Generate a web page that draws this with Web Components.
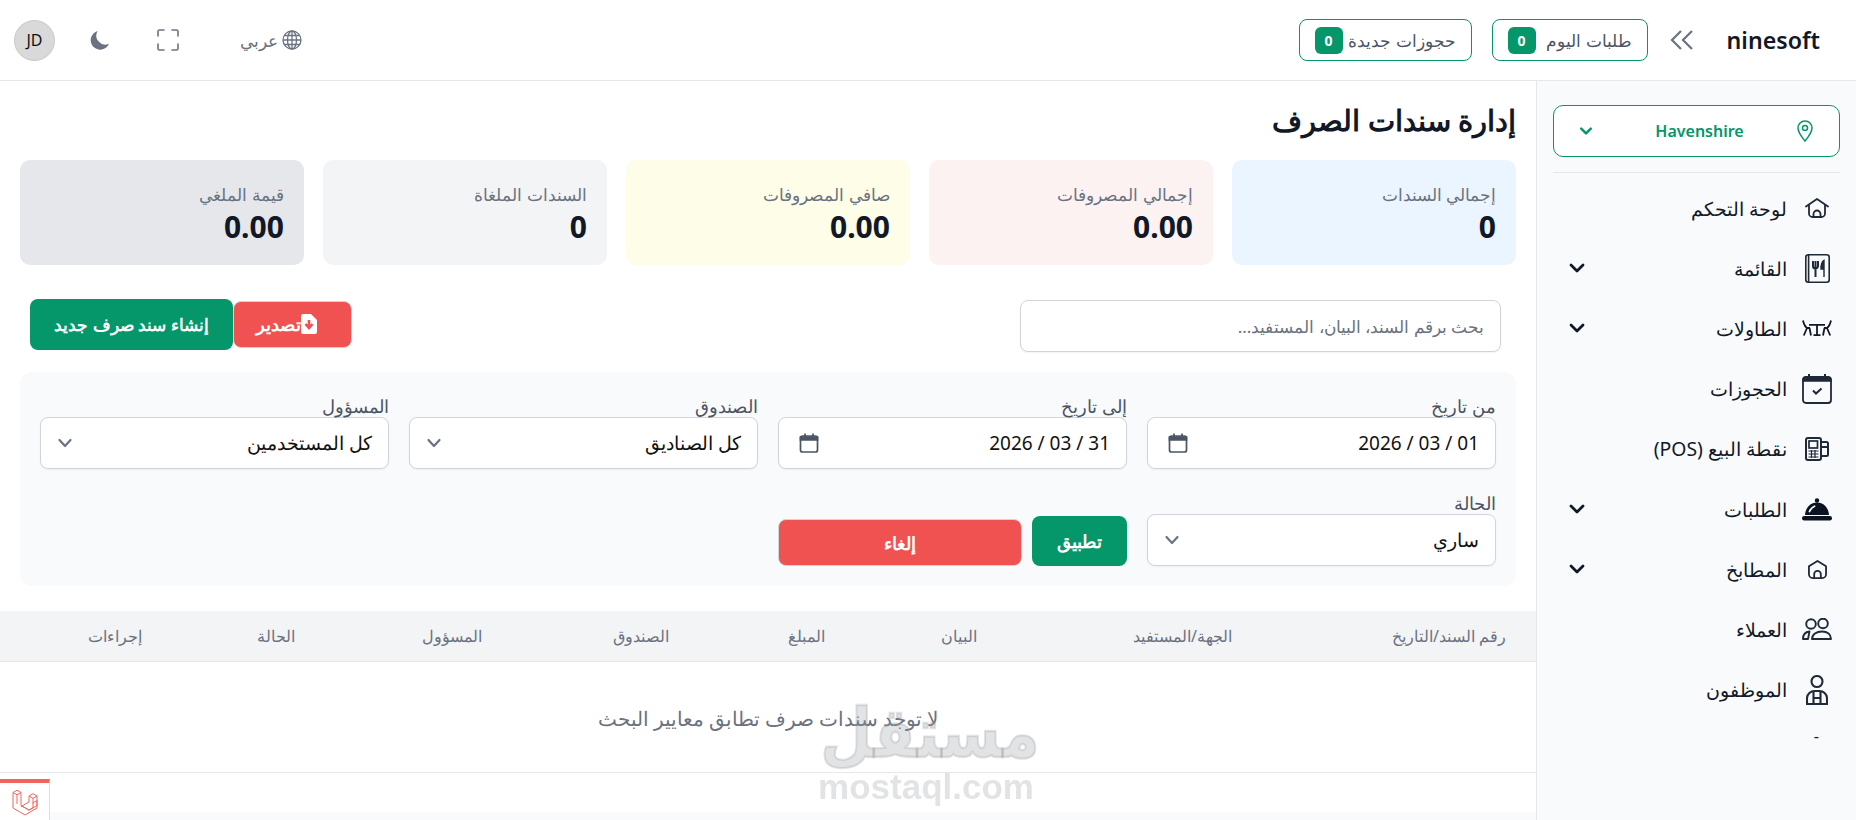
<!DOCTYPE html>
<html lang="ar" dir="rtl">
<head>
<meta charset="utf-8">
<title>إدارة سندات الصرف</title>
<style>
  html, body { margin: 0; height: 100%; overflow: hidden; background: #fff; }
  body { font-family: "Noto Sans", "Open Sans", sans-serif; color: #111827; }
</style>
</head>
<body>
<app-shell>
  <app-topbar slot="top"></app-topbar>
  <page-content slot="main"></page-content>
  <app-sidebar slot="side"></app-sidebar>
</app-shell>
<debug-tab></debug-tab>
<water-mark></water-mark>

<script>
const ICONS = {
  house: `<svg viewBox="0 0 24 20" width="24" height="20" fill="none" stroke="#1f2937" stroke-width="1.800" stroke-linejoin="round" stroke-linecap="round"><path d="M1 8.500 12 1l11 7.500"/><path d="M4 7v8.500A3.500 3.500 0 0 0 7.500 19h9a3.500 3.500 0 0 0 3.500-3.500V7"/><path d="M8.500 19v-3a3.500 3.500 0 0 1 7 0v3" /></svg>`,
  menu: `<svg viewBox="0 0 25 29" width="25" height="29" fill="none" stroke="#1f2937" stroke-width="1.600"><rect x=".8" y=".8" width="23.400" height="27.400" rx="2.500"/><path d="M3.600 .8v27.400"/><path d="M8 7v5a2.500 2.500 0 0 0 5 0V7M10.500 7v16" stroke-width="2"/><path d="M19 23V6.500c-2 1-3 3.500-3 8.500h3z" fill="#1f2937" stroke-width="1.400"/></svg>`,
  tables: `<svg viewBox="0 0 30 16" width="30" height="16" fill="none" stroke="#111827" stroke-width="1.800"><path d="M1 .5C1.800 4 3 6.500 5 8H8M5 8 1.800 15.500M7.500 8 9 15.500"/><path d="M29 .5C28.200 4 27 6.500 25 8H22M25 8l3.200 7.500M22.500 8 21 15.500"/><path d="M7 4.800h16M15 4.800V15M11.500 15.200h7" /></svg>`,
  calendar: `<svg viewBox="0 0 30 30" width="30" height="30" fill="none" stroke="#1f2937" stroke-width="1.800"><rect x="1" y="3" width="28" height="26" rx="3"/><path d="M1 6.500a3 3 0 0 1 3-3h22a3 3 0 0 1 3 3V7H1z" fill="#1f2937" stroke-width="1.500"/><path d="M7 0v4M23 0v4" stroke-width="2"/><path d="m11 16.500 3 3 5.500-5" stroke-width="2"/></svg>`,
  pos: `<svg viewBox="0 0 24 24" width="24" height="24" fill="none" stroke="#1f2937" stroke-width="2"><rect x="1" y="1" width="15" height="22" rx="2"/><rect x="4" y="4" width="8.500" height="7" fill="none" stroke-width="1.700"/><path d="M3.500 14h10M3.500 17h10M3.500 20h10M6.500 13v8M10 13v8" stroke-width="1.200"/><path d="M16 5h5.500a1.500 1.500 0 0 1 1.500 1.500v11a1.500 1.500 0 0 1-1.500 1.500H16M16 10h7"/></svg>`,
  bell: `<svg viewBox="0 0 30 23" width="30" height="23" fill="#0b1220"><circle cx="15" cy="2.500" r="2.200"/><path d="M3 17C3.500 10 8 4.500 15 4.500S26.500 10 27 17z"/><rect x="0" y="18" width="30" height="4.500" rx="2.200"/><path d="M7.500 13.500C8.500 11 10 9.500 12.500 8.300" fill="none" stroke="#f9fafb" stroke-width="1.800" stroke-linecap="round"/></svg>`,
  kitchen: `<svg viewBox="0 0 20 20" width="19" height="19" fill="none" stroke="#1f2937" stroke-width="1.900" stroke-linejoin="round"><path d="M10 1 19 6.500V15a4 4 0 0 1-4 4H5a4 4 0 0 1-4-4V6.500z"/><path d="M6.500 19v-4a3.500 3.500 0 0 1 7 0v4"/></svg>`,
  clients: `<svg viewBox="0 0 30 22" width="30" height="22" fill="none" stroke="#1f2937" stroke-width="1.900" stroke-linejoin="round"><circle cx="9" cy="6" r="4.800"/><circle cx="21" cy="5.500" r="4.800"/><path d="M1 21c0-4 2-7 6.500-7.500L6 21z"/><path d="M10 21c0-4.500 4.500-7.500 10-7.500S29 16.500 29 21z"/></svg>`,
  staff: `<svg viewBox="0 0 22 30" width="22" height="30" fill="none" stroke="#1f2937" stroke-width="2.100" stroke-linejoin="round"><circle cx="11" cy="6.500" r="5.500"/><path d="M1 29v-6a7.500 7.500 0 0 1 7.500-7h5A7.500 7.500 0 0 1 21 23v6z"/><path d="M7.500 16v13M14.500 16v13M7.500 23h7"/></svg>`,
  chevron: `<svg viewBox="0 0 20 20" width="20" height="20" fill="none" stroke="#111827" stroke-width="2.800" stroke-linecap="round" stroke-linejoin="round"><path d="m4 7 6 6 6-6"/></svg>`,
  caret: `<svg viewBox="0 0 20 20" width="20" height="20" fill="none" stroke="#6b7280" stroke-width="2.200" stroke-linecap="round" stroke-linejoin="round"><path d="m4.500 7 5.500 6 5.500-6"/></svg>`,
  date: `<svg viewBox="0 0 20 22" width="20" height="22" fill="none" stroke="#4b5563" stroke-width="1.700"><rect x="1.500" y="4" width="17" height="16" rx="2"/><path d="M1.500 5h17v3h-17z" fill="#4b5563"/><path d="M6 1.500V5M14 1.500V5"/></svg>`
};

// shell: top bar over a main column and the side menu
class AppShell extends HTMLElement {
  constructor() {
    super();
    this.attachShadow({ mode: "open" }).innerHTML = `
    <style>
      :host { display: flex; flex-direction: column; height: 820px; }
      .body { display: flex; flex: 1; min-height: 0; }
      .main { flex: 1; min-width: 0; background: #f9fafb; }
    </style>
    <slot name="top"></slot>
    <div class="body">
      <slot name="side"></slot>
      <div class="main"><slot name="main"></slot></div>
    </div>`;
  }
}

class AppTopbar extends HTMLElement {
  constructor() {
    super();
    this.attachShadow({ mode: "open" }).innerHTML = `
    <style>
      :host { display: flex; align-items: center; justify-content: space-between; height: 80px;
        padding: 0 36px 0 14px; border-bottom: 1px solid #e5e7eb; background: #fff; }
      .start, .end { display: flex; align-items: center; }
      .brand { font-size: 23.200px; font-weight: 600; color: #111827; }
      .toggle { margin: 0 33px 0 22px; display: flex; }
      .lang { display: flex; align-items: center; gap: 4px; color: #6b7280; font-size: 17px; margin-left: 61px; }
      .full { margin-left: 47px; display: flex; }
      .moon { margin-left: 34px; display: flex; }
      .avatar { width: 41px; height: 41px; border-radius: 50%; background: #d9d9d9; border: 1px solid #c9c9c9; box-sizing: border-box;
        display: flex; align-items: center; justify-content: center; font-size: 16px; color: #111; }
    </style>
    <div class="start">
      <span class="brand">ninesoft</span>
      <span class="toggle"><svg viewBox="0 0 24 22" width="24" height="22" fill="none" stroke="#6b7280" stroke-width="2.200" stroke-linejoin="miter"><path d="M11 2 2 11l9 9M22 2l-9 9 9 9"/></svg></span>
      <count-badge label="طلبات اليوم" style="width:156px"></count-badge>
      <count-badge label="حجوزات جديدة" style="width:173px;margin-right:20px"></count-badge>
    </div>
    <div class="end">
      <span class="lang"><svg viewBox="0 0 20 20" width="20" height="20" fill="none" stroke="#6b7280" stroke-width="1.300"><circle cx="10" cy="10" r="9"/><ellipse cx="10" cy="10" rx="4.500" ry="9"/><path d="M10 1v18M1 10h18M2.200 5.500h15.600M2.200 14.500h15.600"/></svg><span>عربي</span></span>
      <span class="full"><svg viewBox="0 0 22 22" width="22" height="22" fill="none" stroke="#6b7280" stroke-width="1.600" stroke-linecap="round"><path d="M1 7V2.500A1.500 1.500 0 0 1 2.500 1H7M15 1h4.500A1.500 1.500 0 0 1 21 2.500V7M21 15v4.500a1.500 1.500 0 0 1-1.500 1.500H15M7 21H2.500A1.500 1.500 0 0 1 1 19.500V15"/></svg></span>
      <span class="moon"><svg viewBox="0 0 22 22" width="21" height="21" fill="#6b7280"><path d="M9 1a10 10 0 1 0 12 13.500A9.500 9.500 0 0 1 9 1z"/></svg></span>
      <span class="avatar">JD</span>
    </div>`;
  }
}

class CountBadge extends HTMLElement {
  constructor() {
    super();
    this.attachShadow({ mode: "open" }).innerHTML = `
    <style>
      :host { display: flex; align-items: center; justify-content: space-between; height: 42px; box-sizing: border-box; padding: 0 15px 0 15px;
        border: 1px solid #059669; border-radius: 8px; background: #fff; font-size: 17px; color: #4b5563; }
      b { display: flex; align-items: center; justify-content: center; width: 28px; height: 27px; border-radius: 6px;
        background: #059669; color: #fff; font-size: 14px; font-weight: 700; }
    </style>
    <span>${this.getAttribute("label")}</span><b>0</b>`;
  }
}

class NavItem extends HTMLElement {
  constructor() {
    super();
    const open = this.hasAttribute("open");
    this.attachShadow({ mode: "open" }).innerHTML = `
    <style>
      :host { display: flex; align-items: center; height: 60.200px; font-size: 19.400px; color: #111827; padding: 0 5px 0 0; }
      .icon { width: 36px; display: flex; justify-content: center; align-items: center; flex: none; }
      .label { margin-right: 12px; flex: 1; }
      .arrow { display: flex; margin-left: 14px; }
    </style>
    <span class="icon">${ICONS[this.getAttribute("icon")]}</span>
    <span class="label"><slot></slot></span>
    ${open ? `<span class="arrow">${ICONS.chevron}</span>` : ""}`;
  }
}

class AppSidebar extends HTMLElement {
  constructor() {
    super();
    this.attachShadow({ mode: "open" }).innerHTML = `
    <style>
      :host { display: block; width: 320px; flex: none; box-sizing: border-box; background: #f9fafb;
        border-left: 1px solid #e5e7eb; padding: 24px 16px 0 16px; }
      .branch { display: flex; align-items: center; justify-content: space-between; height: 52px; box-sizing: border-box;
        border: 1px solid #059669; border-radius: 10px; background: #fff; padding: 0 24px 0 24px; color: #059669; font-size: 16px; font-weight: 600; }
      .name { margin-left: 10px; }
      hr { border: 0; border-top: 1px solid #e5e7eb; margin: 15px 0 5px; }
      nav { display: block; }
      .dash { padding-right: 21px; height: 40px; font-size: 16px; line-height: 32px; }
    </style>
    <div class="branch">
      <svg viewBox="0 0 20 24" width="20" height="24" fill="none" stroke="#059669" stroke-width="1.500"><path d="M10 22C5 16 3 12.500 3 9a7 7 0 0 1 14 0c0 3.500-2 7-7 13z"/><circle cx="10" cy="9" r="2.500"/></svg>
      <span class="name">Havenshire</span>
      <svg viewBox="0 0 20 20" width="16" height="16" fill="none" stroke="#059669" stroke-width="3" stroke-linecap="round" stroke-linejoin="round"><path d="m4 7 6 6 6-6"/></svg>
    </div>
    <hr>
    <nav>
      <nav-item icon="house">لوحة التحكم</nav-item>
      <nav-item icon="menu" open>القائمة</nav-item>
      <nav-item icon="tables" open>الطاولات</nav-item>
      <nav-item icon="calendar">الحجوزات</nav-item>
      <nav-item icon="pos">نقطة البيع (POS)</nav-item>
      <nav-item icon="bell" open>الطلبات</nav-item>
      <nav-item icon="kitchen" open>المطابخ</nav-item>
      <nav-item icon="clients">العملاء</nav-item>
      <nav-item icon="staff">الموظفون</nav-item>
    </nav>
    <div class="dash">-</div>`;
  }
}

class StatCard extends HTMLElement {
  constructor() {
    super();
    this.attachShadow({ mode: "open" }).innerHTML = `
    <style>
      :host { display: block; height: 105px; box-sizing: border-box; padding: 22px 20px 0; border-radius: 10px; background: var(--bg); }
      .t { font-size: 17.300px; line-height: 25px; color: #6b7280; }
      .v { font-size: 30px; line-height: 40px; font-weight: 700; color: #111827; }
    </style>
    <div class="t">${this.getAttribute("label")}</div>
    <div class="v">${this.getAttribute("value")}</div>`;
  }
}

class FilterField extends HTMLElement {
  constructor() {
    super();
    const isDate = this.getAttribute("type") === "date";
    this.attachShadow({ mode: "open" }).innerHTML = `
    <style>
      :host { display: block; }
      label { display: block; font-size: 17.500px; line-height: 22px; color: #4b5563; }
      .box { display: flex; align-items: center; justify-content: space-between; height: 52px; box-sizing: border-box;
        background: #fff; border: 1px solid #d1d5db; border-radius: 8px; box-shadow: 0 1px 2px rgba(0,0,0,.05);
        padding: 0 16px 0 ${isDate ? "20px" : "14px"}; font-size: 19px; color: #111; }
    </style>
    <label>${this.getAttribute("label")}</label>
    <div class="box">
      <span ${isDate ? 'dir="ltr"' : ""}><slot></slot></span>
      ${isDate ? ICONS.date : ICONS.caret}
    </div>`;
  }
}

class ActionButton extends HTMLElement {
  constructor() {
    super();
    this.attachShadow({ mode: "open" }).innerHTML = `
    <style>
      :host { display: inline-flex; align-items: center; justify-content: center; box-sizing: border-box; color: #fff;
        border-radius: 8px; font-size: 16.800px; font-weight: 700; background: #f05252; border: 1px solid #d1d5db; }
      :host([tone="green"]) { background: #059669; border: 0; }
    </style>
    <slot></slot>`;
  }
}

class PageContent extends HTMLElement {
  constructor() {
    super();
    const heads = [["رقم السند/التاريخ",274],["الجهة/المستفيد",255],["البيان",152],["المبلغ",156],["الصندوق",187],["المسؤول",187],["الحالة",153],["إجراءات",172]];
    this.attachShadow({ mode: "open" }).innerHTML = `
    <style>
      :host { display: block; background: #fff; height: 731px; overflow: hidden; }
      .pad { padding: 20px 20px 0; }
      h1 { margin: 0 0 21px; font-size: 28.700px; line-height: 38px; font-weight: 700; color: #111827; }
      .stats { display: grid; grid-template-columns: repeat(5, 1fr); gap: 19.200px; }
      .actions { display: flex; justify-content: space-between; align-items: center; margin: 34px 15px 0 10px; height: 54px; }
      .search { width: 481px; height: 52px; box-sizing: border-box; padding: 0 16px; display: flex; align-items: center;
        border: 1px solid #d1d5db; border-radius: 8px; box-shadow: 0 1px 2px rgba(0,0,0,.05); font-size: 17px; color: #6b7280; background: #fff; }
      .btns { display: flex; align-items: center; margin-bottom: 4px; }
      .export { width: 119px; height: 47px; padding-right: 12px; font-size: 17.500px; }
      .create { width: 203px; height: 51px; }
      .filters { display: grid; grid-template-columns: repeat(4, 1fr); column-gap: 20px; row-gap: 23px; margin-top: 19px;
        padding: 23px 20px 20px; background: #f9fafb; border-radius: 12px; }
      .apply { display: flex; gap: 10px; align-items: flex-end; }
      .apply .ok { width: 95px; height: 50px; font-size: 17.500px; font-weight: 600; }
      .apply .no { flex: 1; height: 47px; font-size: 17.500px; }
      .thead { display: grid; grid-template-columns: ${heads.map(h => h[1] + "px").join(" ")}; height: 50px; align-items: center; margin-top: 25px;
        background: #f3f4f6; border-bottom: 1px solid #e5e7eb; font-size: 16px; color: #6b7280; }
      .thead span { padding-right: 30px; }
      .empty { height: 111px; padding-top: 2px; display: flex; align-items: center; justify-content: center; font-size: 19.600px; color: #6b7280;
        border-bottom: 1px solid #e5e7eb; box-sizing: border-box; }
    </style>
    <div class="pad">
      <h1>إدارة سندات الصرف</h1>
      <div class="stats">
        <stat-card label="إجمالي السندات" value="0" style="--bg:#ebf5ff"></stat-card>
        <stat-card label="إجمالي المصروفات" value="0.00" style="--bg:#fdf2f2"></stat-card>
        <stat-card label="صافي المصروفات" value="0.00" style="--bg:#fdfde8"></stat-card>
        <stat-card label="السندات الملغاة" value="0" style="--bg:#f3f4f6"></stat-card>
        <stat-card label="قيمة الملغي" value="0.00" style="--bg:#e5e7eb"></stat-card>
      </div>
      <div class="actions">
        <div class="search">بحث برقم السند، البيان، المستفيد...</div>
        <div class="btns">
          <action-button class="export"><svg viewBox="0 0 16 20" width="16" height="20"><path d="M2 0h8l6 6v12a2 2 0 0 1-2 2H2a2 2 0 0 1-2-2V2a2 2 0 0 1 2-2z" fill="#fff"/><path d="M8 6v7M4.500 10 8 14l3.500-4" fill="none" stroke="#f05252" stroke-width="2.600"/></svg><span>تصدير</span></action-button>
          <action-button class="create" tone="green">إنشاء سند صرف جديد</action-button>
        </div>
      </div>
      <div class="filters">
        <filter-field label="من تاريخ" type="date">2026 / 03 / 01</filter-field>
        <filter-field label="إلى تاريخ" type="date">2026 / 03 / 31</filter-field>
        <filter-field label="الصندوق">كل الصناديق</filter-field>
        <filter-field label="المسؤول">كل المستخدمين</filter-field>
        <filter-field label="الحالة">ساري</filter-field>
        <div class="apply">
          <action-button class="ok" tone="green">تطبيق</action-button>
          <action-button class="no">إلغاء</action-button>
        </div>
      </div>
    </div>
    <div class="thead">${heads.map(h => `<span>${h[0]}</span>`).join("")}</div>
    <div class="empty">لا توجد سندات صرف تطابق معايير البحث</div>`;
  }
}

// debug toolbar tab stuck to the bottom corner
class DebugTab extends HTMLElement {
  constructor() {
    super();
    this.attachShadow({ mode: "open" }).innerHTML = `
    <style>
      :host { position: fixed; left: 0; bottom: 0; width: 50px; height: 41px; box-sizing: border-box; background: #fff;
        border-top: 4px solid #f4645f; border-right: 1px solid #ddd; display: flex; align-items: center; justify-content: center; }
    </style>
    <svg viewBox="0 0 26 28" width="26" height="28" fill="none" stroke="#f4645f" stroke-width="1" stroke-linejoin="round">
      <path d="M1 4.500 5 2.200l4 2.300v13l8 4.600 8-4.600v-5l-4 2.300v5l-4 2.300"/><path d="M1 4.500v15.500l12 7 12-7V8l-4-2.300L17 8v6l-8 4.500M1 4.500l4 2.300 4-2.300M5 6.800V16M17 8l4 2.300 4-2.300M21 10.300v5M9 17.500l8 4.600"/>
    </svg>`;
  }
}

// mostaql watermark that sits over the page
class WaterMark extends HTMLElement {
  constructor() {
    super();
    this.attachShadow({ mode: "open" }).innerHTML = `
    <style>
      :host { position: fixed; left: 820px; top: 693px; width: 214px; text-align: center; pointer-events: none; color: rgba(150,153,158,.28); white-space: nowrap; }
      .ar { font: 700 60px/76px "DejaVu Sans", sans-serif; -webkit-text-stroke: 2px rgba(150,153,158,.28); transform: translateY(8px) scale(1, 1.15); transform-origin: 50% 100%; margin-right: -6px; }
      .en { font: 700 35px/36px "Liberation Sans", sans-serif; }
    </style>
    <div class="ar">مستقل</div>
    <div class="en">mostaql.com</div>`;
  }
}

customElements.define("app-shell", AppShell);
customElements.define("app-topbar", AppTopbar);
customElements.define("count-badge", CountBadge);
customElements.define("nav-item", NavItem);
customElements.define("app-sidebar", AppSidebar);
customElements.define("stat-card", StatCard);
customElements.define("filter-field", FilterField);
customElements.define("action-button", ActionButton);
customElements.define("page-content", PageContent);
customElements.define("debug-tab", DebugTab);
customElements.define("water-mark", WaterMark);
</script>
</body>
</html>
